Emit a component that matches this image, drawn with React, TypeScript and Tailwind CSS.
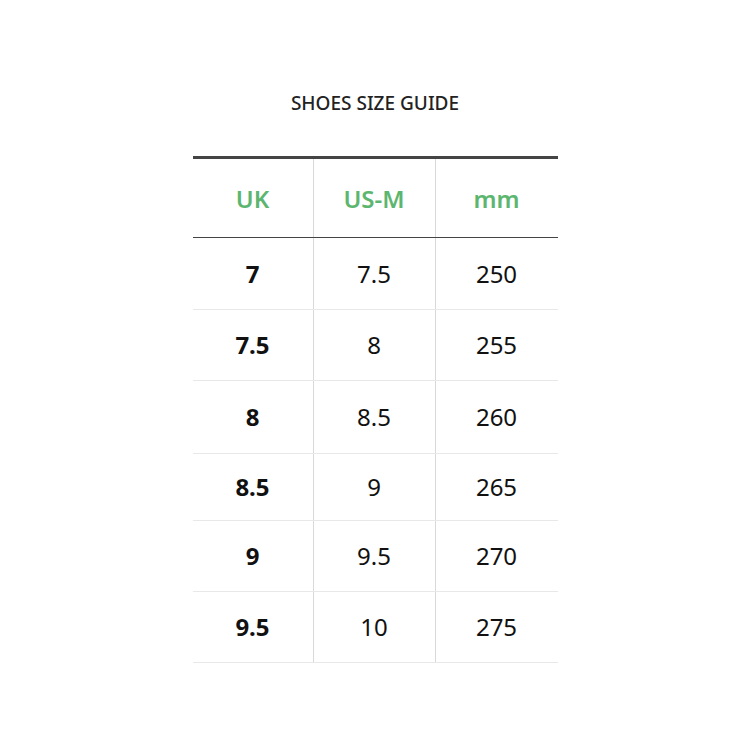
const rows = [
  { uk: '7', us: '7.5', mm: '250', h: 'h-[72px]' },
  { uk: '7.5', us: '8', mm: '255', h: 'h-[71px]' },
  { uk: '8', us: '8.5', mm: '260', h: 'h-[73px]' },
  { uk: '8.5', us: '9', mm: '265', h: 'h-[67px]' },
  { uk: '9', us: '9.5', mm: '270', h: 'h-[71px]' },
  { uk: '9.5', us: '10', mm: '275', h: 'h-[71px]' },
];

export default function App() {
  return (
    <div className="min-h-[750px] bg-white pt-[91px] font-['Noto_Sans',sans-serif]">
      <h1 className="text-center text-[19px] leading-[24px] font-medium text-[#222]">SHOES SIZE GUIDE</h1>

      <div className="mx-auto mt-[41px] w-[365px] border-t-[3px] border-[#444]">
        {/* header */}
        <div className="grid h-[79px] grid-cols-[121px_122px_122px] border-b border-[#444] text-[24px] font-semibold text-[#5cb66f]">
          <div className="flex items-center justify-center border-r border-[#d9d9d9] pt-[2px]">UK</div>
          <div className="flex items-center justify-center border-r border-[#d9d9d9] pt-[2px]">US-M</div>
          <div className="flex items-center justify-center pt-[2px]">mm</div>
        </div>

        {rows.map((r) => (
          <div
            key={r.uk}
            className={`grid grid-cols-[121px_122px_122px] border-b border-[#e8e8e8] text-[24px] text-[#111] ${r.h}`}
          >
            <div className="flex items-center justify-center border-r border-[#d9d9d9] font-bold">{r.uk}</div>
            <div className="flex items-center justify-center border-r border-[#d9d9d9]">{r.us}</div>
            <div className="flex items-center justify-center">{r.mm}</div>
          </div>
        ))}
      </div>
    </div>
  );
}
